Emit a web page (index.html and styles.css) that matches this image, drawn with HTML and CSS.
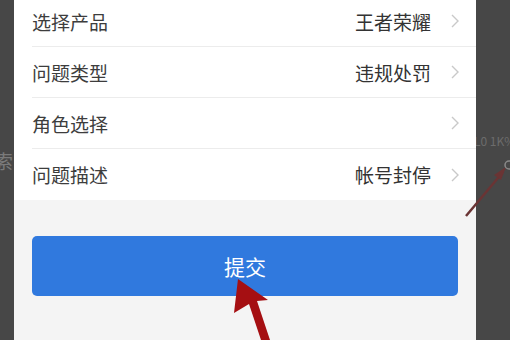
FILE: index.html
```html
<!DOCTYPE html>
<html lang="zh-CN">
<head>
    <meta charset="UTF-8">
    <meta name="viewport" content="width=device-width, initial-scale=1.0">
    <title>问题反馈</title>
    <link rel="stylesheet" href="styles.css">
</head>
<body>

    <div id="screen">
        <!-- dimmed page behind the sheet -->
        <div class="side side-left">
            <span class="ghost-char">索</span>
        </div>

        <div id="sheet">
            <div class="form-list">
                <div class="form-row">
                    <span class="label">选择产品</span>
                    <span class="value">王者荣耀</span>
                    <svg class="chevron" viewBox="0 0 8 14"><path d="M1 1 L7 7 L1 13"/></svg>
                </div>
                <div class="form-row">
                    <span class="label">问题类型</span>
                    <span class="value">违规处罚</span>
                    <svg class="chevron" viewBox="0 0 8 14"><path d="M1 1 L7 7 L1 13"/></svg>
                </div>
                <div class="form-row">
                    <span class="label">角色选择</span>
                    <span class="value"></span>
                    <svg class="chevron" viewBox="0 0 8 14"><path d="M1 1 L7 7 L1 13"/></svg>
                </div>
                <div class="form-row">
                    <span class="label">问题描述</span>
                    <span class="value">帐号封停</span>
                    <svg class="chevron" viewBox="0 0 8 14"><path d="M1 1 L7 7 L1 13"/></svg>
                </div>
            </div>

            <div class="actions">
                <button class="submit-button">提交</button>
            </div>
        </div>

        <div class="side side-right">
            <span class="ghost-text">L0 1K%</span>
        </div>

        <!-- annotation arrows drawn over the screenshot -->
        <svg class="annotations" viewBox="0 0 510 340">
            <polygon class="arrow-main" points="238,279 268,300 257,301 270,340 261,340 249,304 234,313"/>
            <line class="arrow-side" x1="466" y1="216" x2="503" y2="172"/>
            <polygon class="arrow-side-head" points="506,167 494,175 501,180"/>
            <circle class="arrow-side-ring" cx="509" cy="165" r="4"/>
        </svg>
    </div>

</body>
</html>
```

FILE: styles.css
```css
/* Basic reset */
html, body {
    margin: 0;
    padding: 0;
    width: 510px;
    height: 340px;
    overflow: hidden;
    font-family: "Noto Sans CJK SC", "Noto Sans", sans-serif;
    background-color: #474747;
}

#screen {
    position: relative;
    display: flex;
    width: 510px;
    height: 340px;
}

/* --- dimmed background strips --- */
.side {
    background-color: #474747;
    overflow: hidden;
    position: relative;
}
.side-left {
    width: 14px;
}
.side-right {
    flex: 1;
}

.ghost-char {
    display: block;
    margin: 150px 0 0 -6px;
    font-size: 19px;
    line-height: 22px;
    color: #7a7a7a;
}
.ghost-text {
    display: block;
    margin: 133px 0 0 -2px;
    font-size: 12px;
    line-height: 16px;
    color: #6c6c6c;
    white-space: nowrap;
}

/* --- sheet --- */
#sheet {
    width: 462px;
    background-color: #f4f4f4;
    display: flex;
    flex-direction: column;
}

.form-list {
    background-color: #ffffff;
    padding-left: 18px;
    margin-top: -4px;
}

.form-row {
    height: 51px;
    box-sizing: border-box;
    display: flex;
    align-items: center;
    padding-right: 17px;
    border-bottom: 1px solid #ececec;
}
.form-row:last-child {
    border-bottom: none;
}

.label {
    flex: 1;
    font-size: 19px;
    color: #3d3d3d;
}
.value {
    font-size: 19px;
    color: #333333;
    margin-right: 20px;
}

.chevron {
    width: 8px;
    height: 14px;
    fill: none;
    stroke: #c9c9c9;
    stroke-width: 1.4;
}

.actions {
    padding: 36px 18px 0 18px;
}

.submit-button {
    display: block;
    width: 100%;
    height: 60px;
    border: none;
    border-radius: 5px;
    background-color: #3079de;
    color: #ffffff;
    font-family: "Noto Sans CJK SC", "Noto Sans", sans-serif;
    font-size: 21px;
    cursor: pointer;
}

/* --- annotations --- */
.annotations {
    position: absolute;
    left: 0;
    top: 0;
    width: 510px;
    height: 340px;
    pointer-events: none;
}
.arrow-main {
    fill: #a50f12;
}
.arrow-side {
    stroke: #6a3434;
    stroke-width: 2.5;
}
.arrow-side-head {
    fill: #6a3434;
}
.arrow-side-ring {
    fill: none;
    stroke: #8a8a8a;
    stroke-width: 1.5;
}
```
